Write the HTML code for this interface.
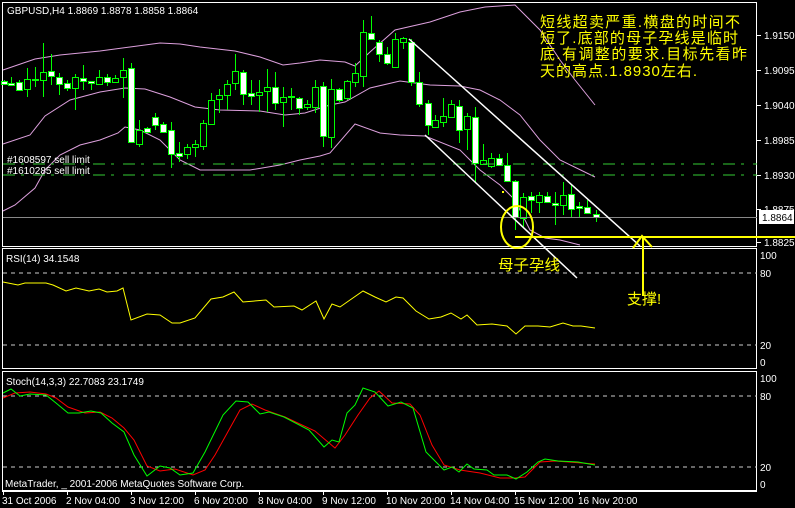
<!DOCTYPE html>
<html><head><meta charset="utf-8"><style>
html,body{margin:0;padding:0;background:#000;width:795px;height:508px;overflow:hidden}
svg{display:block}
text{font-family:"Liberation Sans",sans-serif;font-size:10px;fill:#fff}
text.cn{font-family:"Liberation Sans","WenQuanYi Zen Hei","Noto Sans CJK SC",sans-serif;fill:#ffff00;font-size:15px}
</style></head><body>
<svg id="s" width="795" height="508" xmlns="http://www.w3.org/2000/svg">
<rect width="795" height="508" fill="#000"/>
<rect x="2.5" y="2.5" width="754" height="244" fill="none" stroke="#fff"/>
<line x1="2" y1="248.5" x2="757" y2="248.5" stroke="#fff"/>
<rect x="2.5" y="248.5" width="754" height="120" fill="none" stroke="#fff"/>
<rect x="2.5" y="371.5" width="754" height="119" fill="none" stroke="#fff"/>
<line x1="2" y1="491.5" x2="757" y2="491.5" stroke="#fff"/>
<g id="main"></g>
<line x1="3" y1="164" x2="757" y2="164" stroke="#33cc33" stroke-dasharray="12,6,3,9"/>
<line x1="3" y1="175" x2="757" y2="175" stroke="#33cc33" stroke-dasharray="12,6,3,9"/>
<line x1="3" y1="217.5" x2="757" y2="217.5" stroke="#888"/>
<text x="7" y="163">#1608597 sell limit</text>
<text x="7" y="174">#1610285 sell limit</text>
<text x="7" y="14">GBPUSD,H4  1.8869 1.8878 1.8858 1.8864</text>
<g id="axis"></g>
<rect x="759" y="210" width="35" height="14" fill="#fff"/>
<text x="762" y="221" style="fill:#000">1.8864</text>
<line x1="409" y1="39" x2="640" y2="246" stroke="#fff" stroke-width="1.5"/>
<line x1="425" y1="135" x2="577" y2="278" stroke="#fff" stroke-width="1.5"/>
<ellipse cx="517" cy="227" rx="16" ry="21" fill="none" stroke="#ffff00" stroke-width="2"/>
<line x1="515" y1="237" x2="795" y2="237" stroke="#ffff00" stroke-width="2"/>
<polyline points="633,248 642,236 652,247" fill="none" stroke="#ffff00" stroke-width="2"/>
<line x1="643" y1="237" x2="643" y2="296" stroke="#ffff00" stroke-width="2"/>
<text class="cn" x="498" y="270" textLength="62" lengthAdjust="spacingAndGlyphs" style="font-size:15px">母子孕线</text>
<text class="cn" x="627" y="304" style="font-size:15px">支撑!</text>
<text class="cn" x="540" y="27" textLength="200" lengthAdjust="spacing" style="font-size:15px">短线超卖严重.横盘的时间不</text>
<text class="cn" x="540" y="43" textLength="198" lengthAdjust="spacing" style="font-size:15px">短了.底部的母子孕线是临时</text>
<text class="cn" x="540" y="59" textLength="207" lengthAdjust="spacing" style="font-size:15px">底.有调整的要求.目标先看昨</text>
<text class="cn" x="540" y="76" textLength="157" lengthAdjust="spacing" style="font-size:15px">天的高点.1.8930左右.</text>
<line x1="3" y1="273" x2="757" y2="273" stroke="#ccc" stroke-dasharray="4,4"/>
<line x1="3" y1="345" x2="757" y2="345" stroke="#ccc" stroke-dasharray="4,4"/>
<text x="6" y="262">RSI(14) 34.1548</text>
<text x="760" y="259">100</text><text x="760" y="277">80</text><text x="760" y="349">20</text><text x="760" y="366">0</text>
<polyline fill="none" stroke="#ffff00" points="3,282 18,285 25,283 46,283 53,285 66,291 76,288 89,291 99,289 107,292 117,291 123,288 131,320 147,314 160,315 172,323 180,323 195,318 211,299 223,297 234,292 243,302 266,300 274,307 294,306 302,310 316,301 324,319 332,304 340,307 350,300 363,291 375,297 386,302 396,297 403,298 416,311 429,319 441,317 451,313 461,319 467,315 477,325 492,324 507,326 516,334 525,326 538,326 550,327 563,323 573,326 581,326 595,328"/>
<line x1="3" y1="396" x2="757" y2="396" stroke="#ccc" stroke-dasharray="4,4"/>
<line x1="3" y1="467" x2="757" y2="467" stroke="#ccc" stroke-dasharray="4,4"/>
<text x="6" y="385">Stoch(14,3,3) 22.7083 23.1749</text>
<text x="760" y="382">100</text><text x="760" y="400">80</text><text x="760" y="471">20</text><text x="760" y="488">0</text>
<polyline fill="none" stroke="#ff0000" points="3,398 15,393 30,392 46,394 56,398 68,407 85,413 100,412 112,418 124,428 134,440 147,466 160,471 175,469 193,475 205,470 215,455 230,428 240,410 252,404 265,410 285,417 315,431 335,448 345,435 358,415 370,398 379,391 392,403 410,404 420,415 432,445 444,465 460,470 480,473 500,478 515,478 525,477 540,462 555,461 595,464"/>
<polyline fill="none" stroke="#00ff00" points="3,393 11,389 20,396 30,394 46,395 56,403 68,413 79,413 91,411 101,413 112,423 124,432 134,455 147,476 160,466 170,468 180,475 193,473 205,452 223,415 236,401 248,402 260,414 269,412 284,417 309,430 324,447 332,440 339,442 347,413 355,405 363,388 375,392 388,406 401,402 413,408 426,452 444,470 452,467 459,472 467,464 474,469 487,470 494,475 507,475 516,479 527,472 538,462 545,459 558,461 578,462 595,465"/>
<text x="5" y="487">MetaTrader, _ 2001-2006 MetaQuotes Software Corp.</text>
<g id="dates"></g>
</svg>
<script>
var NS="http://www.w3.org/2000/svg";
function el(p,t,a){var e=document.createElementNS(NS,t);for(var k in a)e.setAttribute(k,a[k]);p.appendChild(e);return e;}
var m=document.getElementById("main");
var P="#dda0dd";
el(m,"polyline",{fill:"none",stroke:P,points:"3,70 35,59 60,55 100,51 130,47 160,43 180,44 200,47 235,51 260,57 283,65 300,63 320,60 345,62 355,66 370,52 395,30 430,22 460,12 485,7 515,5 520,10 540,30 560,60 575,80 595,105"});
el(m,"polyline",{fill:"none",stroke:P,points:"3,144 30,135 45,116 70,100 100,92 125,88 145,89 170,97 195,107 220,110 260,111 285,115 305,113 330,105 345,102 370,88 400,81 430,85 460,86 480,90 500,100 520,115 540,140 560,160 595,177"});
el(m,"polyline",{fill:"none",stroke:P,points:"3,211 15,205 35,188 45,170 60,155 80,145 100,140 118,133 125,127 140,130 160,140 180,160 200,170 250,170 280,165 300,160 320,156 330,153 355,124 380,133 400,135 425,136 460,150 470,160 480,170 500,185 515,200 530,230 545,238 560,240 580,245"});
var C=[[4,80,81,84,85,1],[11,77,83,85,86,1],[19,80,82,90,91,1],[27,68,79,89,97,0],[35,67,79,80,87,1],[43,43,72,80,97,0],[51,54,71,76,85,1],[59,73,77,84,95,1],[67,80,83,88,91,1],[75,74,77,88,110,0],[83,65,78,81,90,1],[91,81,81,83,90,1],[99,70,77,84,85,0],[107,74,77,82,86,1],[115,75,78,82,83,0],[123,58,70,77,98,0],[131,63,68,142,143,1],[139,120,130,144,147,0],[147,127,128,132,132,1],[155,113,117,125,130,1],[163,122,124,132,133,1],[171,122,130,154,168,1],[179,142,153,156,162,1],[187,144,147,154,159,0],[195,140,144,147,157,0],[203,120,123,146,150,0],[211,93,100,124,124,0],[219,89,95,99,113,0],[227,80,84,95,110,0],[235,54,71,83,90,0],[243,70,72,94,105,1],[251,80,93,96,105,1],[259,80,92,95,112,0],[267,69,87,91,112,0],[275,72,87,103,110,1],[283,87,97,102,127,0],[291,88,96,97,110,1],[299,97,98,108,115,1],[307,100,104,107,110,0],[315,80,87,107,113,0],[323,82,86,136,147,1],[331,79,89,137,148,0],[339,88,89,100,102,1],[347,80,81,98,100,0],[355,63,73,82,87,0],[363,20,32,76,87,0],[371,16,33,39,40,1],[379,40,42,54,62,1],[387,47,54,63,65,1],[395,33,39,67,68,0],
[403,37,38,42,49,0],[411,39,42,82,86,1],[419,72,82,104,107,1],[428,100,103,125,135,1],[435,115,120,127,128,0],[443,98,116,122,127,0],[451,100,104,117,118,0],[459,100,106,130,143,1],[467,113,116,129,150,0],[475,107,117,163,182,1],[483,144,160,164,165,0],[491,153,158,166,168,0],[499,154,158,165,166,1],[507,153,165,181,182,1],[515,180,181,217,230,1],[523,193,197,218,227,0],[531,192,196,200,213,1],[539,192,195,202,213,0],[547,192,196,202,203,1],[555,192,203,205,225,1],[563,182,195,205,215,0],[571,185,194,209,217,1],[579,202,206,208,217,1],[587,200,207,213,214,1],[596,210,214,217,222,1]];
C.forEach(function(c){var x=c[0]+0.5;
el(m,"line",{x1:x,y1:c[1],x2:x,y2:c[4],stroke:"#00ff00"});
el(m,"rect",{x:c[0]-2.5,y:c[2]+0.5,width:6,height:Math.max(1,c[3]-c[2]),fill:c[5]?"#fff":"#000",stroke:"#00ff00"});});
el(m,"rect",{x:502,y:191,width:2,height:2,fill:"#ffff00"});
var a=document.getElementById("axis");
[["1.9150",35],["1.9095",70],["1.9040",105],["1.8985",140],["1.8930",175],["1.8875",209],["1.8825",242]].forEach(function(p){
el(a,"line",{x1:757,y1:p[1]+0.5,x2:761,y2:p[1]+0.5,stroke:"#fff"});
var t=el(a,"text",{x:764,y:p[1]+4});t.textContent=p[0];});
var d=document.getElementById("dates");
[["31 Oct 2006",3],["2 Nov 04:00",67],["3 Nov 12:00",131],["6 Nov 20:00",195],["8 Nov 04:00",259],["9 Nov 12:00",323],["10 Nov 20:00",387],["14 Nov 04:00",451],["15 Nov 12:00",515],["16 Nov 20:00",579]].forEach(function(p){
el(d,"line",{x1:p[1]+0.5,y1:491,x2:p[1]+0.5,y2:495,stroke:"#fff"});
var t=el(d,"text",{x:p[1]-1,y:504});t.textContent=p[0];});
</script>
</body></html>
